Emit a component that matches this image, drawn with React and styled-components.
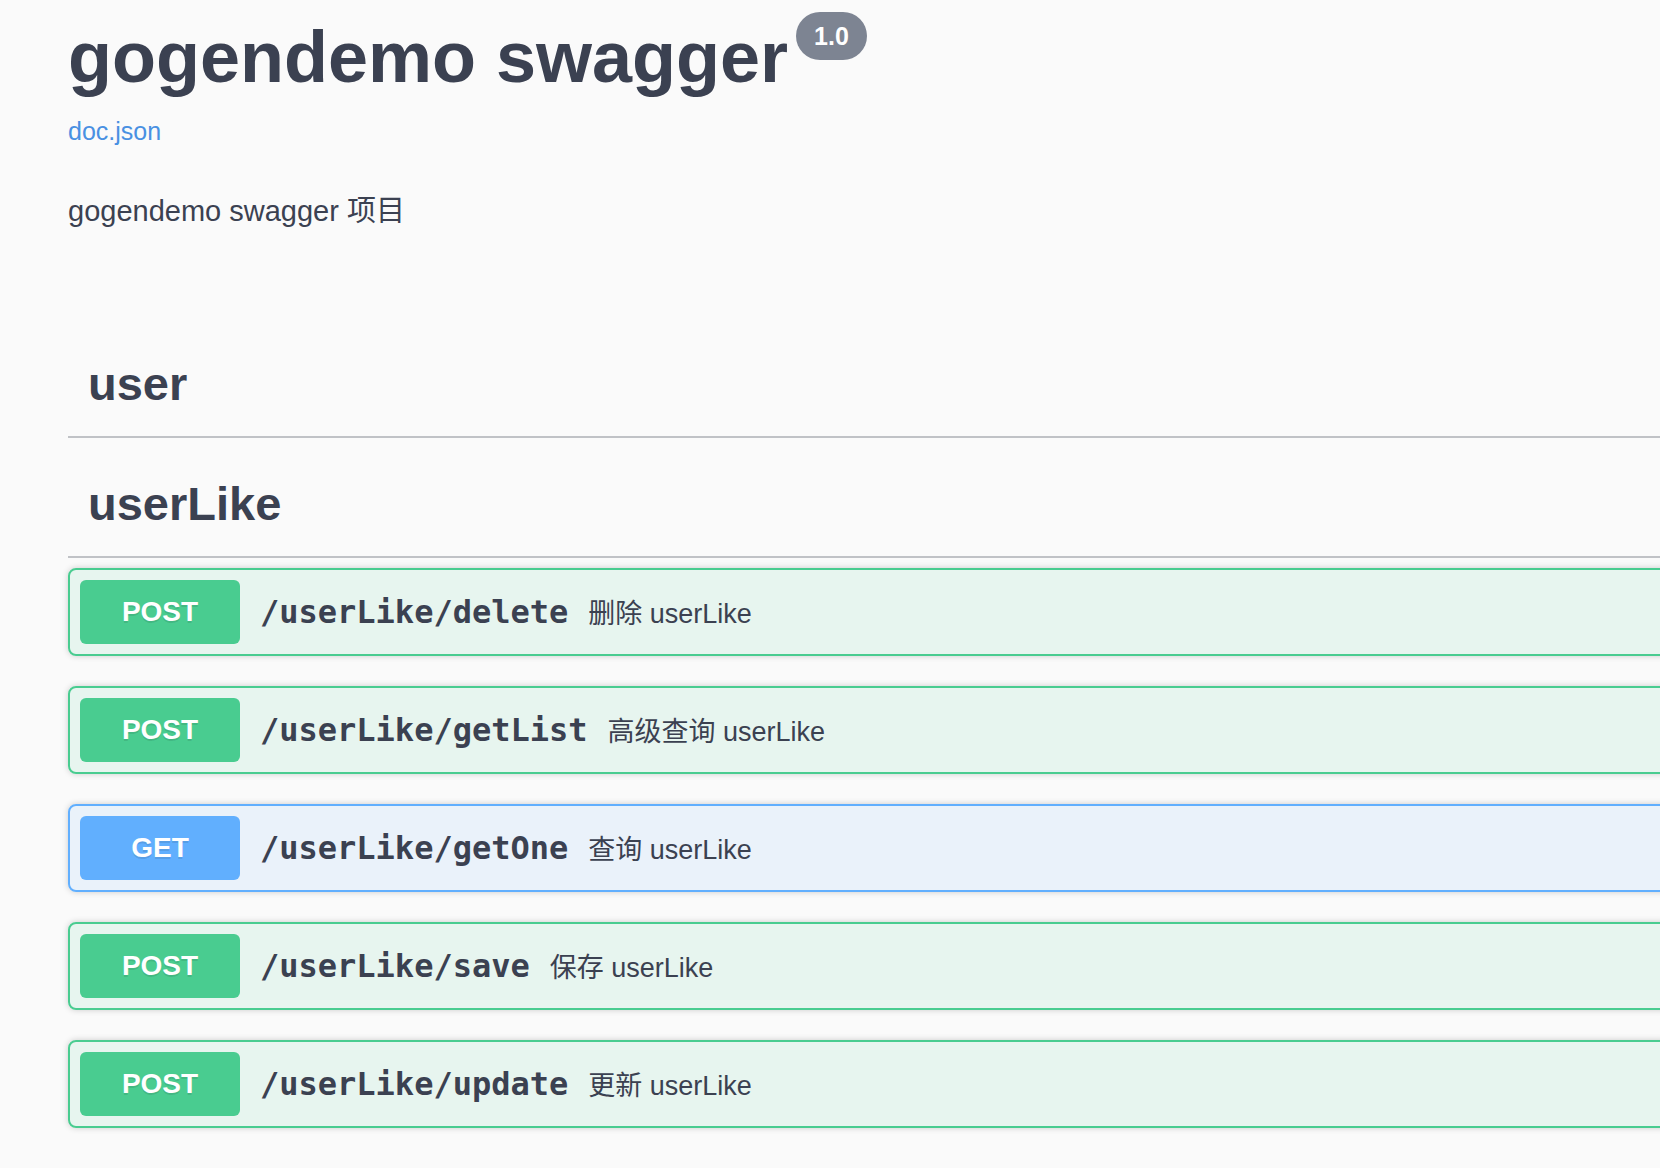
import React from "react";
import styled, { createGlobalStyle } from "styled-components";

const GlobalStyle = createGlobalStyle`
  html, body {
    margin: 0;
    padding: 0;
    background: #fafafa;
    overflow: hidden;
  }
  body {
    font-family: "Liberation Sans", "Noto Sans CJK SC", sans-serif;
    color: #3b4151;
  }
`;

const Page = styled.div`
  width: 2000px;
  padding: 16px 0 40px 68px;
  box-sizing: border-box;
`;

const Info = styled.section`
  margin: 0 0 97px;
`;

const TitleRow = styled.div`
  display: flex;
  align-items: flex-start;
`;

const Title = styled.h2`
  margin: 0;
  font-size: 72px;
  line-height: 82px;
  font-weight: 700;
  color: #3b4151;
`;

const Version = styled.small`
  margin: -4px 0 0 8px;
  height: 48px;
  padding: 0 18px;
  border-radius: 57px;
  background: #7d8492;
  color: #fff;
  font-size: 25px;
  font-weight: 700;
  line-height: 48px;
`;

const DocLink = styled.a`
  display: block;
  margin-top: 17px;
  font-size: 25px;
  line-height: 32px;
  color: #4990e2;
  text-decoration: none;
`;

const Description = styled.p`
  margin: 44px 0 0;
  font-size: 29px;
  line-height: 40px;
  color: #3b4151;
`;

const TagRow = styled.div`
  display: flex;
  align-items: center;
  box-sizing: border-box;
  height: 110px;
  padding: 2px 40px 0 20px;
  margin: 0 0 10px;
  border-bottom: 2px solid rgba(59, 65, 81, 0.3);
`;

const TagName = styled.h3`
  margin: 0;
  font-size: 47px;
  font-weight: 700;
  color: #3b4151;
`;

const colors = {
  POST: { main: "#49cc90", bg: "rgba(73, 204, 144, 0.1)" },
  GET: { main: "#61affe", bg: "rgba(97, 175, 254, 0.1)" },
};

const OpBlock = styled.div`
  margin: 0 0 30px;
  border: 2px solid ${(p) => colors[p.$method].main};
  border-radius: 8px;
  background: ${(p) => colors[p.$method].bg};
  box-shadow: 0 0 6px rgba(0, 0, 0, 0.19);
`;

const Summary = styled.div`
  display: flex;
  align-items: center;
  padding: 10px;
`;

const Method = styled.span`
  display: flex;
  align-items: center;
  justify-content: center;
  width: 160px;
  height: 64px;
  border-radius: 6px;
  background: ${(p) => colors[p.$method].main};
  color: #fff;
  font-size: 28px;
  font-weight: 700;
  text-shadow: 0 2px 0 rgba(0, 0, 0, 0.1);
`;

const Path = styled.span`
  padding: 0 20px;
  font-family: "DejaVu Sans Mono", monospace;
  font-size: 32px;
  font-weight: 700;
  color: #3b4151;
`;

const OpDesc = styled.span`
  padding-top: 3px;
  font-size: 27px;
  line-height: 36px;
  color: #3b4151;
`;

const ops = [
  { method: "POST", path: "/userLike/delete", desc: "删除 userLike" },
  { method: "POST", path: "/userLike/getList", desc: "高级查询 userLike" },
  { method: "GET", path: "/userLike/getOne", desc: "查询 userLike" },
  { method: "POST", path: "/userLike/save", desc: "保存 userLike" },
  { method: "POST", path: "/userLike/update", desc: "更新 userLike" },
];

export default function App() {
  return (
    <Page>
      <GlobalStyle />
      <Info>
        <TitleRow>
          <Title>gogendemo swagger</Title>
          <Version>1.0</Version>
        </TitleRow>
        <DocLink href="#">doc.json</DocLink>
        <Description>gogendemo swagger 项目</Description>
      </Info>

      <TagRow>
        <TagName>user</TagName>
      </TagRow>
      <TagRow>
        <TagName>userLike</TagName>
      </TagRow>

      {ops.map((op) => (
        <OpBlock key={op.path} $method={op.method}>
          <Summary>
            <Method $method={op.method}>{op.method}</Method>
            <Path>{op.path}</Path>
            <OpDesc>{op.desc}</OpDesc>
          </Summary>
        </OpBlock>
      ))}
    </Page>
  );
}
